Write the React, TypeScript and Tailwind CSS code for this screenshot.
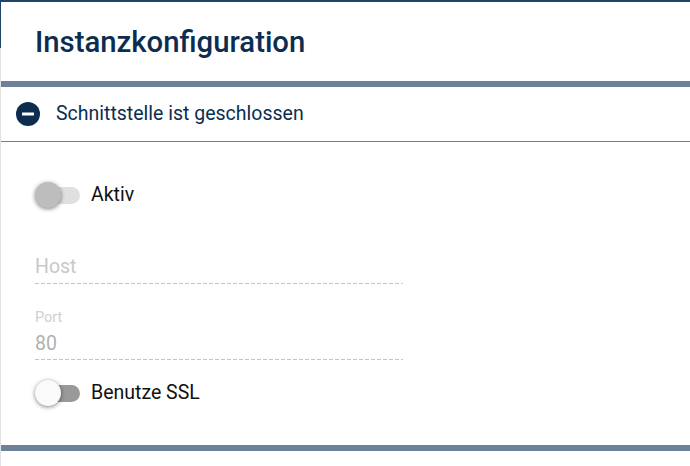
import React from "react";

function Toggle({ on, label }: { on: boolean; label: string }) {
  return (
    <div className="flex items-center">
      <div className="relative w-[45px] h-[26px] flex items-center shrink-0">
        <div className={`ml-[7px] w-[38px] h-[17px] rounded-full ${on ? "bg-[#e0e0e0]" : "bg-[#999999]"}`} />
        <div
          className={`absolute left-0 top-0 w-[26px] h-[26px] rounded-full shadow-[0_1px_4px_rgba(0,0,0,0.5)] ${
            on ? "bg-[#bdbdbd]" : "bg-[#fafafa]"
          }`}
        />
      </div>
      <span className="ml-[11px] text-[19.5px] leading-[26px] text-[#111111]">{label}</span>
    </div>
  );
}

function Dashes() {
  return (
    <div className="h-px w-[368px] bg-[repeating-linear-gradient(90deg,#c4c4c4_0,#c4c4c4_4px,transparent_4px,transparent_6px)]" />
  );
}

export default function App() {
  return (
    <div className="relative w-[690px] h-[466px] overflow-hidden bg-white font-['Roboto',sans-serif]">
      <div className="absolute left-0 top-0 w-px h-[48px] bg-[#1f4467]" />
      <div className="h-[2px] bg-[#1f4467]" />
      <div className="h-[464px] border-l border-[#e2e2e2]">
        <div className="h-[79px] pl-[34px] pt-[21px]">
          <h1 className="text-[29.3px] leading-[38px] font-medium text-[#0c2d50]">Instanzkonfiguration</h1>
        </div>
        <div className="h-[6px] bg-[#6b8299]" />
        <div className="h-[55px] flex items-center pl-[15px] border-b border-[#6b8299]">
          <svg width="24" height="24" viewBox="0 0 24 24" className="shrink-0">
            <circle cx="12" cy="12" r="12" fill="#0c2d50" />
            <rect x="6" y="10.5" width="12" height="3" rx="0.5" fill="#ffffff" />
          </svg>
          <span className="ml-[16px] text-[19.5px] text-[#0c2d50]">Schnittstelle ist geschlossen</span>
        </div>
        <div className="pl-[34px] h-[303px]">
          <div className="pt-[40px]">
            <Toggle on label="Aktiv" />
          </div>
          <div className="mt-[46px] h-[29px]">
            <span className="block text-[19.5px] leading-[26px] text-[#c8c8c8] mt-[1px]">Host</span>
          </div>
          <Dashes />
          <div className="mt-[26px] h-[49px]">
            <div className="text-[14.5px] leading-[16px] text-[#d0d0d0]">Port</div>
            <div className="text-[19.5px] leading-[26px] text-[#b0b0b0] mt-[5px]">80</div>
          </div>
          <Dashes />
          <div className="mt-[20px]">
            <Toggle on={false} label="Benutze SSL" />
          </div>
        </div>
        <div className="h-[6px] bg-[#6b8299]" />
      </div>
    </div>
  );
}
